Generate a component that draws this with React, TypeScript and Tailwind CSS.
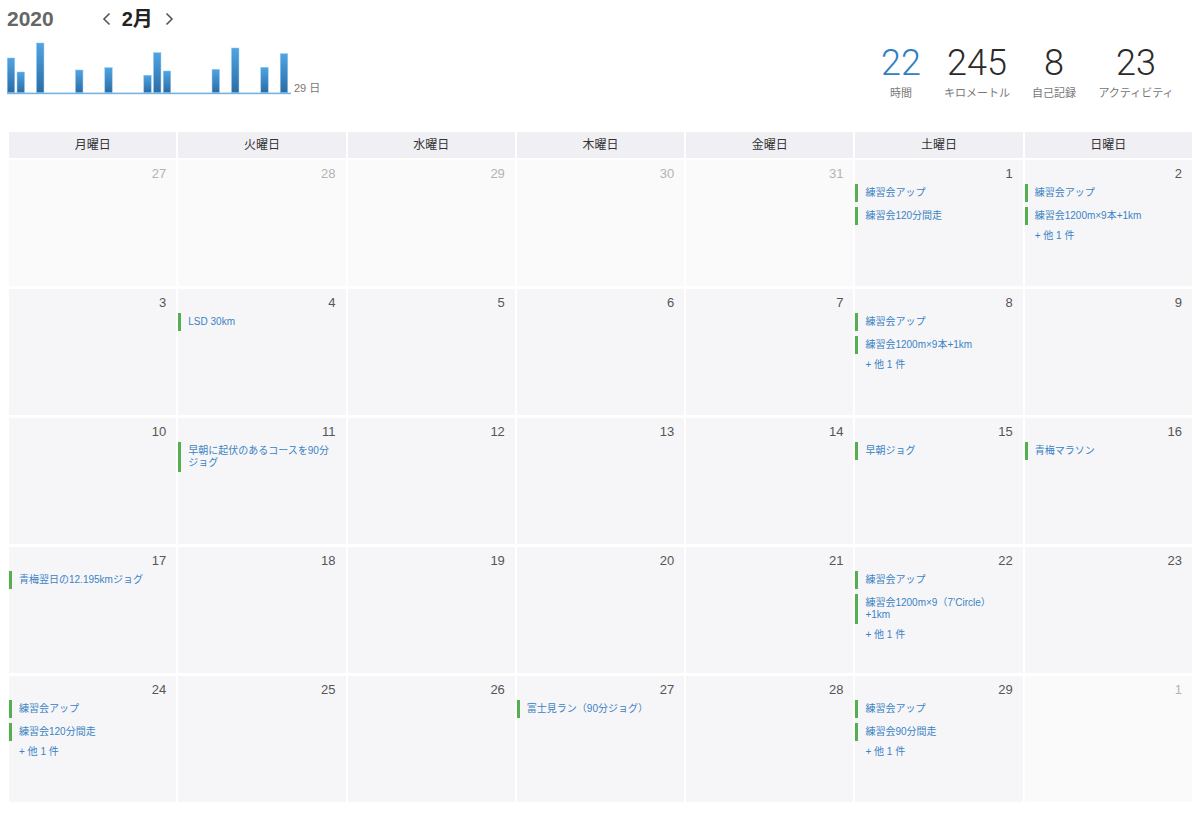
import React from "react";

type Cell = { d: number; other?: boolean; ev?: string[]; more?: boolean };

const rows: Cell[][] = [
  [
    { d: 27, other: true },
    { d: 28, other: true },
    { d: 29, other: true },
    { d: 30, other: true },
    { d: 31, other: true },
    { d: 1, ev: ["練習会アップ", "練習会120分間走"] },
    { d: 2, ev: ["練習会アップ", "練習会1200m×9本+1km"], more: true },
  ],
  [
    { d: 3 },
    { d: 4, ev: ["LSD 30km"] },
    { d: 5 },
    { d: 6 },
    { d: 7 },
    { d: 8, ev: ["練習会アップ", "練習会1200m×9本+1km"], more: true },
    { d: 9 },
  ],
  [
    { d: 10 },
    { d: 11, ev: ["早朝に起伏のあるコースを90分ジョグ"] },
    { d: 12 },
    { d: 13 },
    { d: 14 },
    { d: 15, ev: ["早朝ジョグ"] },
    { d: 16, ev: ["青梅マラソン"] },
  ],
  [
    { d: 17, ev: ["青梅翌日の12.195kmジョグ"] },
    { d: 18 },
    { d: 19 },
    { d: 20 },
    { d: 21 },
    { d: 22, ev: ["練習会アップ", "練習会1200m×9（7’Circle）+1km"], more: true },
    { d: 23 },
  ],
  [
    { d: 24, ev: ["練習会アップ", "練習会120分間走"], more: true },
    { d: 25 },
    { d: 26 },
    { d: 27, ev: ["富士見ラン（90分ジョグ）"] },
    { d: 28 },
    { d: 29, ev: ["練習会アップ", "練習会90分間走"], more: true },
    { d: 1, other: true },
  ],
];

const days = ["月曜日", "火曜日", "水曜日", "木曜日", "金曜日", "土曜日", "日曜日"];

const bars: [number, number][] = [
  [1, 34.7],
  [2, 20.7],
  [4, 49.7],
  [8, 22.7],
  [11, 25],
  [15, 17.4],
  [16, 40],
  [17, 21.7],
  [22, 23.4],
  [24, 44.7],
  [27, 25.4],
  [29, 39],
];

function Chart() {
  return (
    <svg width="284" height="57" viewBox="0 0 284 57">
      <defs>
        <linearGradient id="bg" x1="0" y1="0" x2="0" y2="1">
          <stop offset="0" stopColor="#4fa4e4" />
          <stop offset="1" stopColor="#2b6ca4" />
        </linearGradient>
      </defs>
      {bars.map(([d, h]) => {
        const x = (d - 1) * 9.75;
        return (
          <rect
            key={d}
            x={x + 0.3}
            y={54.7 - h}
            width={7.4}
            height={h}
            fill="url(#bg)"
            stroke="#8cc4ec"
            strokeWidth={0.5}
          />
        );
      })}
      <rect x="0" y="54.6" width="284" height="1.6" fill="#74b2e2" />
    </svg>
  );
}

function Chevron({ dir }: { dir: "l" | "r" }) {
  return (
    <svg width="9" height="14" viewBox="0 0 9 14">
      {dir === "l" ? (
        <polyline points="7.5,1.5 2,7 7.5,12.5" fill="none" stroke="#555" strokeWidth="1.6" />
      ) : (
        <polyline points="1.5,1.5 7,7 1.5,12.5" fill="none" stroke="#555" strokeWidth="1.6" />
      )}
    </svg>
  );
}

function Stat({ n, label, w, blue }: { n: string; label: string; w: string; blue?: boolean }) {
  return (
    <div className={`${w} flex flex-col items-center`}>
      <div
        className={`font-['Roboto','Liberation_Sans',sans-serif] font-light text-[36px] leading-[40px] ${
          blue ? "text-[#2f7fc1]" : "text-[#2a2a2a]"
        }`}
      >
        {n}
      </div>
      <div className="mt-[3px] text-[11px] leading-[14px] text-[#777]">{label}</div>
    </div>
  );
}

function DayCell({ c }: { c: Cell }) {
  return (
    <div className={`h-[126px] flex flex-col ${c.other ? "bg-[#fafafa]" : "bg-[#f6f6f9]"}`}>
      <div
        className={`pt-[6px] pr-[10px] text-right text-[13px] leading-[16px] ${
          c.other ? "text-[#b3b3b3]" : "text-[#555]"
        }`}
      >
        {c.d}
      </div>
      {c.ev && (
        <div className="mt-[2px] flex flex-col gap-[4.5px] pr-[10px]">
          {c.ev.map((e, i) => (
            <div
              key={i}
              className="border-l-[3px] border-[#55ae4f] pl-[7px] py-[3px] text-[10px] leading-[12px] text-[#3a83c3]"
            >
              {e}
            </div>
          ))}
        </div>
      )}
      {c.more && (
        <div className="mt-[5px] pl-[10px] text-[10px] leading-[12px] text-[#3a83c3]">+ 他 1 件</div>
      )}
    </div>
  );
}

export default function App() {
  return (
    <div className="w-[1200px] h-[814px] bg-white font-['Liberation_Sans','Noto_Sans_CJK_JP',sans-serif] overflow-hidden">
      <div className="h-[132px] flex justify-between">
        <div className="pl-[7px] pt-[6px]">
          <div className="flex items-center h-[26px]">
            <span className="text-[21px] font-bold text-[#666] leading-[26px]">2020</span>
            <span className="ml-[48px] flex items-center">
              <Chevron dir="l" />
            </span>
            <span className="ml-[11px] text-[20px] font-bold text-[#222] leading-[26px]">2月</span>
            <span className="ml-[12px] flex items-center">
              <Chevron dir="r" />
            </span>
          </div>
          <div className="mt-[6px] flex items-end">
            <Chart />
            <span className="ml-[3px] text-[11px] leading-[13px] text-[#777]">29 日</span>
          </div>
        </div>
        <div className="pt-[43px] pr-[22px] flex items-start">
          <Stat n="22" label="時間" w="w-[78px]" blue />
          <Stat n="245" label="キロメートル" w="w-[74px]" />
          <Stat n="8" label="自己記録" w="w-[80px]" />
          <Stat n="23" label="アクティビティ" w="w-[84px]" />
        </div>
      </div>
      <div className="pl-[9px] pr-[8px]">
        <div className="grid grid-cols-7 gap-x-[2px]">
          {days.map((d) => (
            <div key={d} className="h-[26px] bg-[#efeff4] flex items-center justify-center text-[12px] text-[#333]">
              {d}
            </div>
          ))}
        </div>
        <div className="mt-[2px] grid grid-cols-7 gap-x-[2px] gap-y-[3px]">
          {rows.flat().map((c, i) => (
            <DayCell key={i} c={c} />
          ))}
        </div>
      </div>
    </div>
  );
}
